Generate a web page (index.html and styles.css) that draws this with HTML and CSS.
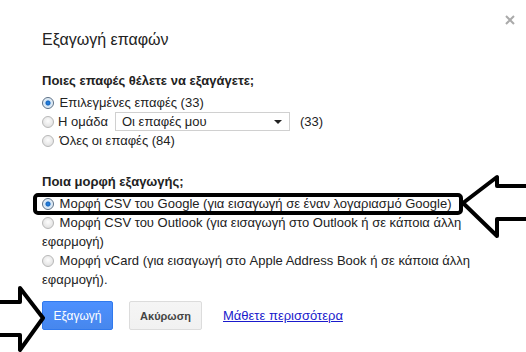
FILE: index.html
```html
<!DOCTYPE html>
<html lang="el">
<head>
  <meta charset="UTF-8" />
  <title>Εξαγωγή επαφών</title>
  <link rel="stylesheet" href="styles.css">
</head>
<body>
  <div class="dialog">
    <button class="close" aria-label="Κλείσιμο">
      <svg width="10" height="10" viewBox="0 0 10 10"><path d="M1 1 L9 9 M9 1 L1 9" stroke="#aaa" stroke-width="2"/></svg>
    </button>

    <h1 class="title">Εξαγωγή επαφών</h1>

    <h2 class="section-title">Ποιες επαφές θέλετε να εξαγάγετε;</h2>
    <div class="options">
      <label class="option"><input type="radio" name="who" checked> Επιλεγμένες επαφές (33)</label>
      <label class="option group-row">
        <input type="radio" name="who"> Η ομάδα
        <span class="select">Οι επαφές μου <span class="caret"></span></span>
        (33)
      </label>
      <label class="option"><input type="radio" name="who"> Όλες οι επαφές (84)</label>
    </div>

    <h2 class="section-title second">Ποια μορφή εξαγωγής;</h2>
    <div class="options">
      <label class="option"><input type="radio" name="fmt" checked> Μορφή CSV του Google (για εισαγωγή σε έναν λογαριασμό Google)</label>
      <label class="option"><input type="radio" name="fmt"> Μορφή CSV του Outlook (για εισαγωγή στο Outlook ή σε κάποια άλλη εφαρμογή)</label>
      <label class="option"><input type="radio" name="fmt"> Μορφή vCard (για εισαγωγή στο Apple Address Book ή σε κάποια άλλη εφαρμογή).</label>
    </div>

    <div class="actions">
      <button class="btn btn-primary">Εξαγωγή</button>
      <button class="btn btn-cancel">Ακύρωση</button>
      <a href="#" class="learn-more">Μάθετε περισσότερα</a>
    </div>
  </div>

  <!-- hand-drawn markup over the screenshot -->
  <svg class="markup" width="526" height="352" viewBox="0 0 526 352" aria-hidden="true">
    <rect x="35" y="195" width="426" height="18" rx="3" fill="none" stroke="#000" stroke-width="4"/>
    <path d="M463 203 L497 177 L497 186 L530 186 L530 219 L497 219 L497 236 Z" fill="#fff" stroke="#000" stroke-width="4" stroke-linejoin="round"/>
    <path d="M-5 302 L20 302 L20 288 L43 318 L20 350 L20 335 L-5 335 Z" fill="#fff" stroke="#000" stroke-width="4" stroke-linejoin="round"/>
  </svg>
</body>
</html>
```

FILE: styles.css
```css
body {
  margin: 0;
  background: #fff;
  font-family: "Liberation Sans", Arial, sans-serif;
  font-size: 13px;
  color: #222;
  width: 526px;
  height: 352px;
  overflow: hidden;
  position: relative;
}

.dialog {
  padding: 30px 0 0 42px;
  width: 430px;
}

.close {
  position: absolute;
  top: 15px;
  right: 11px;
  border: none;
  background: none;
  padding: 0;
  width: 10px;
  height: 10px;
  line-height: 0;
}

.title {
  margin: 0 0 22px;
  font-size: 16px;
  font-weight: normal;
  line-height: 20px;
  color: #222;
}

.section-title {
  margin: 0 0 3px;
  font-size: 13px;
  font-weight: bold;
  line-height: 18px;
}

.section-title.second {
  margin-top: 23px;
}

.options {
  display: flex;
  flex-direction: column;
}

.option {
  line-height: 19px;
}

.option input {
  appearance: none;
  -webkit-appearance: none;
  width: 12px;
  height: 12px;
  margin: 0 2px 0 0;
  border: 1px solid #b8b8b8;
  border-radius: 50%;
  background: radial-gradient(circle at 50% 40%, #fdfdfd, #d9d9d9);
  vertical-align: -2px;
}

.option input:checked {
  border-color: #5a6f85;
  background: radial-gradient(circle, #2a8ae6 0, #1565c0 2px, #cfe3f5 3px, #e9f1f8 5px);
}

.group-row {
  display: flex;
  align-items: center;
  height: 19px;
}

.group-row input {
  margin-right: 4px;
}

.select {
  display: inline-flex;
  align-items: center;
  justify-content: space-between;
  box-sizing: border-box;
  width: 175px;
  height: 19px;
  margin: 0 10px 0 7px;
  padding: 0 6px;
  border: 1px solid #d0d0d0;
  background: #fff;
}

.caret {
  width: 0;
  height: 0;
  border-left: 4px solid transparent;
  border-right: 4px solid transparent;
  border-top: 4px solid #222;
  margin-right: 1px;
}

.actions {
  display: flex;
  align-items: center;
  margin-top: 12px;
}

.btn {
  box-sizing: border-box;
  height: 29px;
  border-radius: 2px;
  font-family: "Liberation Sans", Arial, sans-serif;
  font-size: 11px;
  font-weight: bold;
  padding: 0;
}

.btn-primary {
  width: 71px;
  background: linear-gradient(#4d90fe, #4787ed);
  border: 1px solid #3079ed;
  color: #fff;
  font-weight: normal;
  font-size: 12px;
}

.btn-cancel {
  width: 73px;
  margin-left: 16px;
  background: linear-gradient(#f5f5f5, #f1f1f1);
  border: 1px solid #dcdcdc;
  color: #444;
}

.learn-more {
  margin-left: 21px;
  color: #1a1acc;
  text-decoration: underline;
}

.markup {
  position: absolute;
  top: 0;
  left: 0;
  pointer-events: none;
}
```
